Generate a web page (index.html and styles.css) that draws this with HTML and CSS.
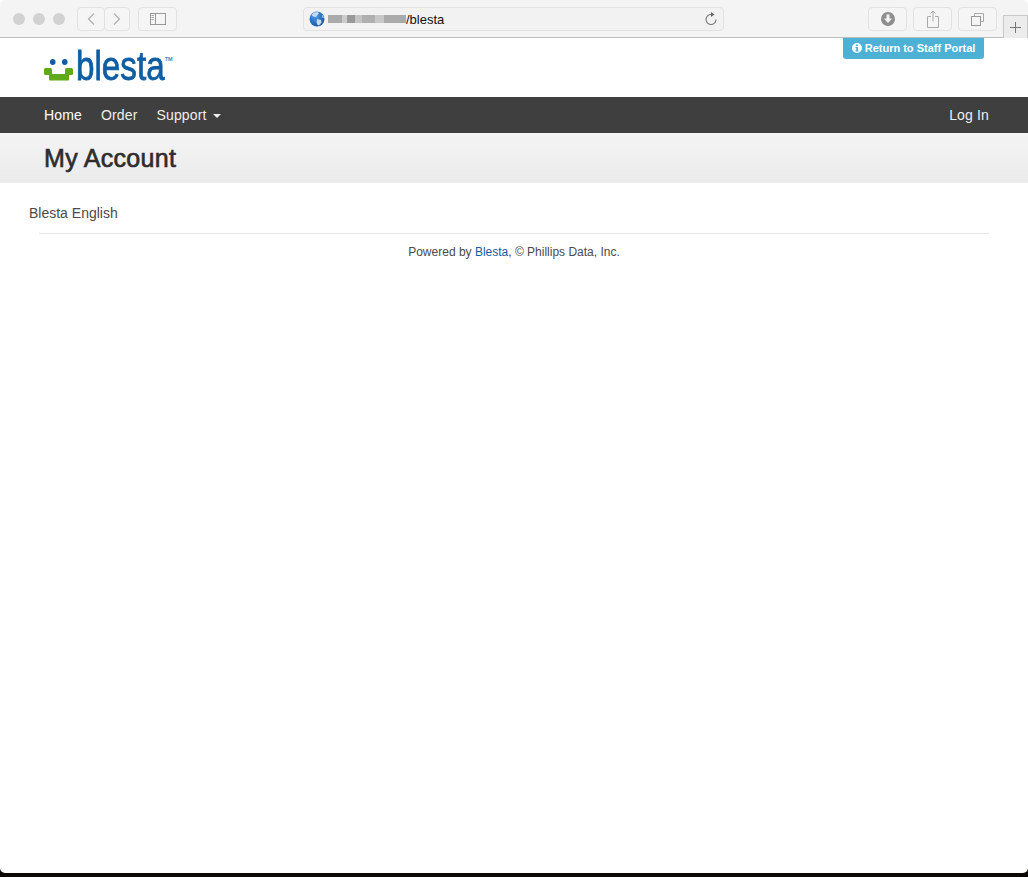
FILE: index.html
```html
<!DOCTYPE html>
<html lang="en">
<head>
<meta charset="utf-8">
<title>Blesta</title>
<link rel="stylesheet" href="styles.css">
</head>
<body>
<div class="window">
  <div class="chrome">
    <div class="lights"><span class="light"></span><span class="light"></span><span class="light"></span></div>
    <div class="navbtns">
      <span class="tbtn nav"><svg width="10" height="14" viewBox="0 0 10 14"><path d="M8 1.500 2.500 7 8 12.500" fill="none" stroke="#b0b0b0" stroke-width="1.200"/></svg></span>
      <span class="tbtn nav"><svg width="10" height="14" viewBox="0 0 10 14"><path d="M2 1.500 7.500 7 2 12.500" fill="none" stroke="#b0b0b0" stroke-width="1.200"/></svg></span>
    </div>
    <span class="tbtn side"><svg width="16" height="12" viewBox="0 0 16 12"><rect x=".5" y=".5" width="15" height="11" fill="none" stroke="#999"/><path d="M5.500 .5v11" stroke="#999"/><path d="M1.500 2.500h2.500M1.500 4.500h2.500M1.500 6.500h2.500" stroke="#aaa"/></svg></span>
    <div class="address">
      <svg class="globe" width="16" height="16" viewBox="0 0 16 16"><defs><radialGradient id="sea" cx=".4" cy=".3" r=".8"><stop offset="0" stop-color="#4d9be8"/><stop offset="1" stop-color="#0f4f9e"/></radialGradient></defs><circle cx="8" cy="8" r="7.500" fill="url(#sea)"/><path d="M5 1.500 9 1c1 1 1 2-.5 3L7 6 4 5.500 2.500 4zM8 8l4 1 .5 2.500-2.500 3-1.500-.5-1-3zM13 3.500l2 3-1.500 .5z" fill="#c3daf2"/></svg>
      <span class="blur"></span><span class="url">/blesta</span>
      <svg class="reload" width="14" height="14" viewBox="0 0 14 14"><path d="M7.500 2.500A5 5 0 1 0 12 7.500" fill="none" stroke="#777" stroke-width="1.100"/><path d="M7 0v5l3.500-2.500z" fill="#666"/></svg>
    </div>
    <div class="tools">
      <span class="tbtn tool"><svg width="16" height="16" viewBox="0 0 16 16"><circle cx="8" cy="8" r="7" fill="#8f8f8f"/><path d="M6.500 3.500h3v4h2.500L8 12 4 7.500h2.500z" fill="#f4f4f4"/></svg></span>
      <span class="tbtn tool"><svg width="12" height="18" viewBox="0 0 12 18"><path d="M4 6.500H.5v11h11v-11H8M6 11.500V1M3.500 3.500 6 1l2.500 2.500" fill="none" stroke="#aaa"/></svg></span>
      <span class="tbtn tool"><svg width="13" height="13" viewBox="0 0 13 13"><path d="M3.500 3V.5h9v8H10" fill="none" stroke="#aaa"/><rect x=".5" y="3.500" width="9" height="9" fill="none" stroke="#999"/></svg></span>
    </div>
    <span class="newtab"><svg width="11" height="11" viewBox="0 0 11 11"><path d="M5.500 0v11M0 5.500h11" stroke="#777"/></svg></span>
  </div>
  <div class="page">
    <header class="header">
      <a class="logo" href="#">
        <svg class="smile" width="30" height="27" viewBox="0 0 30 27"><rect x="6" y="4" width="5.500" height="6" rx="2.700" fill="#0f5ea3"/><rect x="18" y="4" width="5.500" height="6" rx="2.700" fill="#0f5ea3"/><path d="M0 14.500q0-1.500 1.500-1.500h5q1.500 0 1.500 1.500V19h13v-4.500q0-1.500 1.500-1.500h5q1.500 0 1.500 1.500v4q0 1.500-1.500 1.500h-2.500v4.500q0 1-1 1H6q-1 0-1-1V20H1.500q-1.500 0-1.500-1.500z" fill="#5fa91b"/></svg>
        <span class="wordmark">blesta</span><span class="tm">TM</span>
      </a>
      <a class="staff" href="#"><svg class="info" width="10" height="10" viewBox="0 0 10 10"><circle cx="5" cy="5" r="5" fill="#fff"/><rect x="4" y="1.500" width="2" height="1.600" fill="#4cb1d5"/><path d="M3.500 4h2.500v3.500h.7v1H3.500v-1h.7V5h-.7z" fill="#4cb1d5"/></svg>Return to Staff Portal</a>
    </header>
    <nav class="navbar">
      <ul class="navlist">
        <li class="active">Home</li>
        <li>Order</li>
        <li>Support<span class="caret"></span></li>
      </ul>
      <span class="login">Log In</span>
    </nav>
    <div class="titlebar"><h1>My Account</h1></div>
    <main class="content">Blesta English</main>
    <footer class="footer">Powered by <a href="#">Blesta</a>, © Phillips Data, Inc.</footer>
  </div>
</div>
</body>
</html>
```
FILE: styles.css
```css
* { box-sizing: border-box; }
html, body { margin: 0; height: 100%; background: #0c0806; }
body { font-family: "Liberation Sans", Arial, sans-serif; overflow: hidden; }
.window {
  height: 873px;
  background: #fff;
  border-radius: 0 0 5px 5px;
  overflow: hidden;
  display: flex;
  flex-direction: column;
}
.chrome {
  height: 38px;
  flex: none;
  background: #f4f4f4;
  border-bottom: 1px solid #bdbdbd;
  border-radius: 5px 5px 0 0;
  display: flex;
  align-items: flex-start;
  padding: 7px 0 0 13px;
}
.lights { display: flex; gap: 8px; margin-top: 6px; }
.light { width: 12px; height: 12px; border-radius: 50%; background: #d2d2d2; }
.tbtn {
  display: flex;
  align-items: center;
  justify-content: center;
  height: 24px;
  border: 1px solid #e2e2e2;
  border-radius: 4px;
  background: #f5f5f5;
}
.navbtns { display: flex; margin-left: 12px; }
.nav { width: 28px; }
.nav + .nav { width: 26px; margin-left: -1px; }
.side { width: 39px; margin-left: 8px; }
.address {
  width: 421px;
  height: 24px;
  margin-left: 126px;
  border: 1px solid #e2e2e2;
  border-radius: 4px;
  background: #f2f2f2;
  display: flex;
  align-items: center;
  padding-left: 5px;
  font-size: 13px;
  color: #111;
}
.globe { flex: none; }
.blur {
  width: 78px;
  height: 8px;
  margin-left: 3px;
  filter: blur(.7px);
  background: linear-gradient(90deg, #aaa 0 18%, #ccc 18% 25%, #999 25% 34%, #c4c4c4 34% 44%, #b0b0b0 44% 60%, #c8c8c8 60% 72%, #aaa 72% 100%);
}
.url { flex: 1; }
.reload { margin-right: 5px; }
.tools { display: flex; gap: 6px; margin-left: 144px; }
.tool { width: 39px; }
.newtab {
  width: 25px;
  height: 23px;
  margin: 8px 0 0 6px;
  background: #ececec;
  border: 1px solid #c9c9c9;
  border-bottom: 0;
  display: flex;
  align-items: center;
  justify-content: center;
  flex: none;
}
.page { flex: 1; display: flex; flex-direction: column; }
.header {
  height: 59px;
  flex: none;
  display: flex;
  justify-content: space-between;
  align-items: flex-start;
  padding: 0 44px;
}
.logo {
  display: flex;
  align-items: flex-start;
  text-decoration: none;
  color: #0f5ea3;
  padding-top: 5px;
}
.smile { margin-top: 12px; flex: none; }
.wordmark {
  font-size: 40px;
  line-height: 46px;
  margin: 0 -18px 0 2px;
  -webkit-text-stroke: .8px #0f5ea3;
  transform: scaleX(.83);
  transform-origin: left center;
}
.tm { font-size: 5.5px; font-weight: bold; margin-top: 13px; color: #4a86ba; }
.staff {
  width: 141px;
  height: 21px;
  padding-bottom: 2px;
  background: #4cb1d5;
  color: #fff;
  font-size: 11px;
  font-weight: bold;
  border-radius: 0 0 3px 3px;
  text-decoration: none;
  display: flex;
  align-items: center;
  justify-content: center;
  gap: 3px;
}
.navbar {
  height: 36px;
  flex: none;
  background: #3f3f3f;
  color: #eee;
  font-size: 14px;
  letter-spacing: .15px;
  display: flex;
  align-items: center;
  justify-content: space-between;
  padding: 0 39px 0 44px;
}
.navlist { list-style: none; margin: 0; padding: 0; display: flex; gap: 19px; }
.active { color: #fff; }
.caret {
  display: inline-block;
  margin-left: 6px;
  vertical-align: middle;
  border-top: 4px solid #eee;
  border-left: 4px solid transparent;
  border-right: 4px solid transparent;
}
.titlebar {
  height: 50px;
  flex: none;
  background: linear-gradient(#f4f4f4, #ebebeb);
  padding: 1px 0 0 44px;
  display: flex;
  align-items: center;
}
.titlebar h1 {
  margin: 0;
  font-size: 25px;
  font-weight: normal;
  letter-spacing: .3px;
  -webkit-text-stroke: .65px #2d2d2d;
  color: #2d2d2d;
}
.content { padding: 22px 0 0 29px; font-size: 14px; line-height: 17px; color: #4a4a4a; }
.footer {
  margin: 11px 39px 0;
  padding-top: 10px;
  border-top: 1px solid #e6e6e6;
  text-align: center;
  font-size: 12px;
  line-height: 16px;
  color: #4a4a4a;
}
.footer a { color: #0f5ea3; text-decoration: none; }
```
